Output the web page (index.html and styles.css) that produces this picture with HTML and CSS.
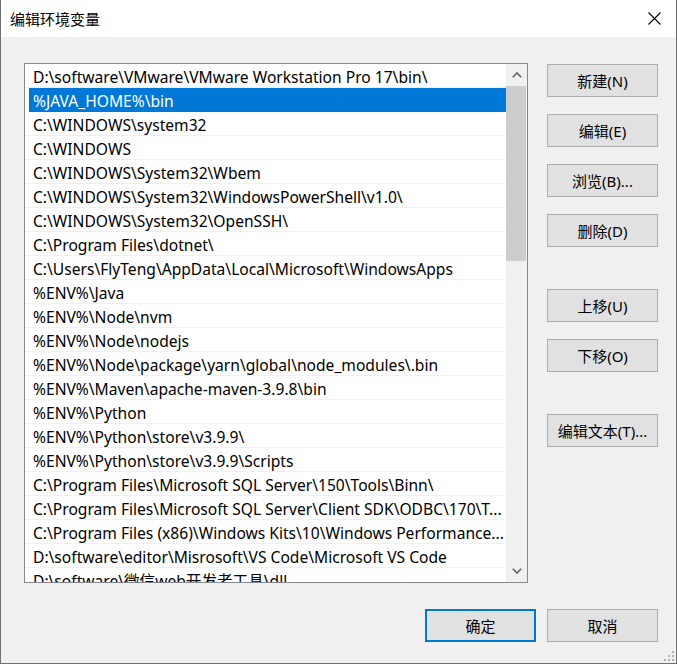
FILE: index.html
```html
<!DOCTYPE html>
<html lang="zh-CN">
<head>
  <meta charset="UTF-8">
  <meta name="viewport" content="width=device-width, initial-scale=1.0">
  <title>编辑环境变量</title>
  <link rel="stylesheet" href="styles.css">
</head>
<body>
  <div class="window">
    <header class="titlebar">
      <span class="title">编辑环境变量</span>
      <svg class="close" width="13" height="13" viewBox="0 0 13 13" aria-label="关闭">
        <path d="M0.5 0.5 L12.5 12.5 M12.5 0.5 L0.5 12.5" stroke="#000" stroke-width="1.1" fill="none"/>
      </svg>
    </header>

    <div class="content">
      <div class="listbox">
        <ul class="rows">
          <li class="row">D:\software\VMware\VMware Workstation Pro 17\bin\</li>
          <li class="row selected">%JAVA_HOME%\bin</li>
          <li class="row">C:\WINDOWS\system32</li>
          <li class="row">C:\WINDOWS</li>
          <li class="row">C:\WINDOWS\System32\Wbem</li>
          <li class="row">C:\WINDOWS\System32\WindowsPowerShell\v1.0\</li>
          <li class="row">C:\WINDOWS\System32\OpenSSH\</li>
          <li class="row">C:\Program Files\dotnet\</li>
          <li class="row">C:\Users\FlyTeng\AppData\Local\Microsoft\WindowsApps</li>
          <li class="row">%ENV%\Java</li>
          <li class="row">%ENV%\Node\nvm</li>
          <li class="row">%ENV%\Node\nodejs</li>
          <li class="row">%ENV%\Node\package\yarn\global\node_modules\.bin</li>
          <li class="row">%ENV%\Maven\apache-maven-3.9.8\bin</li>
          <li class="row">%ENV%\Python</li>
          <li class="row">%ENV%\Python\store\v3.9.9\</li>
          <li class="row">%ENV%\Python\store\v3.9.9\Scripts</li>
          <li class="row">C:\Program Files\Microsoft SQL Server\150\Tools\Binn\</li>
          <li class="row">C:\Program Files\Microsoft SQL Server\Client SDK\ODBC\170\T...</li>
          <li class="row">C:\Program Files (x86)\Windows Kits\10\Windows Performance...</li>
          <li class="row">D:\software\editor\Misrosoft\VS Code\Microsoft VS Code</li>
          <li class="row">D:\software\微信web开发者工具\dll</li>
        </ul>
        <div class="scrollbar">
          <div class="arrow">
            <svg width="10" height="6" viewBox="0 0 10 6"><polyline points="0.8,5.2 5,1 9.2,5.2" fill="none" stroke="#606060" stroke-width="1.6"/></svg>
          </div>
          <div class="track">
            <div class="thumb"></div>
          </div>
          <div class="arrow">
            <svg width="10" height="6" viewBox="0 0 10 6"><polyline points="0.8,0.8 5,5 9.2,0.8" fill="none" stroke="#606060" stroke-width="1.6"/></svg>
          </div>
        </div>
      </div>

      <div class="side">
        <div class="group">
          <button class="btn">新建(N)</button>
          <button class="btn">编辑(E)</button>
          <button class="btn">浏览(B)...</button>
          <button class="btn">删除(D)</button>
        </div>
        <div class="group">
          <button class="btn">上移(U)</button>
          <button class="btn">下移(O)</button>
        </div>
        <div class="group">
          <button class="btn">编辑文本(T)...</button>
        </div>
      </div>
    </div>

    <footer class="footer">
      <button class="btn default">确定</button>
      <button class="btn">取消</button>
    </footer>

    <svg class="grip" width="12" height="12" viewBox="0 0 12 12">
      <rect x="9" y="1" width="2" height="2" fill="#b4b4b4"/>
      <rect x="5" y="5" width="2" height="2" fill="#b4b4b4"/>
      <rect x="9" y="5" width="2" height="2" fill="#b4b4b4"/>
      <rect x="1" y="9" width="2" height="2" fill="#b4b4b4"/>
      <rect x="5" y="9" width="2" height="2" fill="#b4b4b4"/>
      <rect x="9" y="9" width="2" height="2" fill="#b4b4b4"/>
    </svg>
  </div>
</body>
</html>
```

FILE: styles.css
```css
:root {
  --window-bg: #f0f0f0;
  --window-border: #6f6f6f;
  --list-border: #828790;
  --row-line: #f0f0f0;
  --select: #0078d7;
  --btn-bg: #e1e1e1;
  --btn-border: #adadad;
  --thumb: #cdcdcd;
}
* {
  box-sizing: border-box;
}
body {
  margin: 0;
  font-family: 'Noto Sans', 'Noto Sans CJK SC', sans-serif;
  font-size: 15px;
  color: #000;
  background: #fff;
}
.window {
  position: relative;
  width: 677px;
  height: 664px;
  display: flex;
  flex-direction: column;
  background: var(--window-bg);
  border: 1px solid var(--window-border);
  border-top: none;
}
.titlebar {
  height: 37px;
  flex: none;
  display: flex;
  align-items: center;
  justify-content: space-between;
  padding: 0 15px 0 9px;
  background: #fff;
}
.title {
  font-size: 15px;
  line-height: 1;
  margin-top: 2px;
}
.close {
  display: block;
}
.content {
  display: flex;
  gap: 19px;
  padding: 26px 18px 0 23px;
}
/* 목록 영역 */
.listbox {
  width: 504px;
  height: 520px;
  flex: none;
  display: flex;
  background: #fff;
  border: 1px solid var(--list-border);
  overflow: hidden;
}
.rows {
  list-style: none;
  margin: 0;
  padding: 0 0 0 1px;
  flex: 1;
  min-width: 0;
  font-size: 15.6px;
}
.row {
  height: 24px;
  line-height: 24px;
  padding: 1px 0 0 7px;
  white-space: nowrap;
  overflow: hidden;
  text-overflow: ellipsis;
  border-bottom: 1px solid var(--row-line);
}
.row.selected {
  margin-left: 3px;
  padding-left: 4px;
  background: var(--select);
  color: #fff;
  border-bottom-color: var(--select);
}
.scrollbar {
  width: 21px;
  flex: none;
  display: flex;
  flex-direction: column;
  background: var(--window-bg);
}
.arrow {
  height: 22px;
  flex: none;
  display: flex;
  align-items: center;
  justify-content: center;
}
.arrow svg {
  display: block;
}
.track {
  flex: 1;
}
.thumb {
  height: 175px;
  margin: 0 1px 0 0;
  background: var(--thumb);
}
/* 오른쪽 버튼 */
.side {
  width: 111px;
  display: flex;
  flex-direction: column;
  gap: 42px;
  padding-top: 1px;
}
.group {
  display: flex;
  flex-direction: column;
  gap: 17px;
}
.btn {
  width: 111px;
  height: 33px;
  padding: 0 0 1px;
  font: inherit;
  color: #000;
  background: var(--btn-bg);
  border: 1px solid var(--btn-border);
  border-radius: 0;
}
.btn.default {
  border: 2px solid var(--select);
}
.footer {
  display: flex;
  justify-content: flex-end;
  gap: 11px;
  margin-top: 26px;
  padding-right: 18px;
}
.grip {
  position: absolute;
  right: 1px;
  bottom: 1px;
}
```
